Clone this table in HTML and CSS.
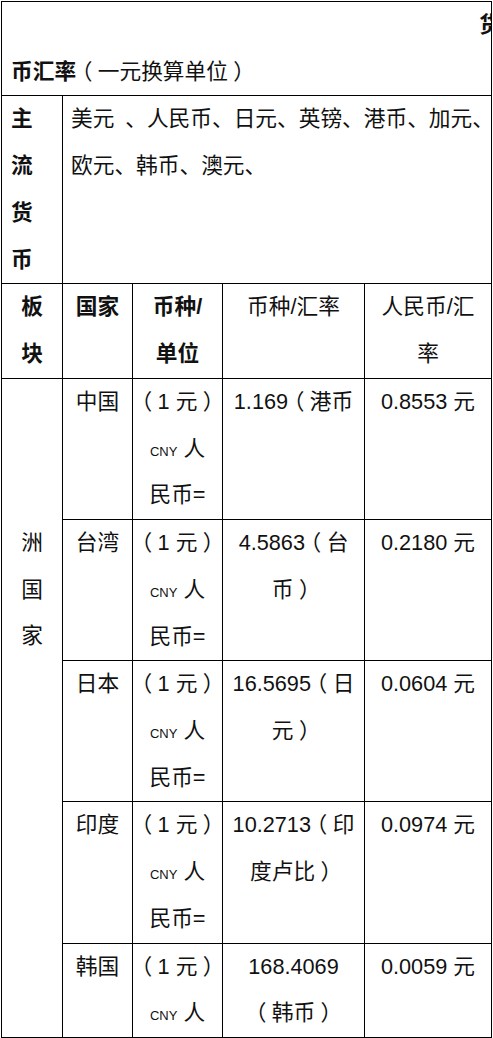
FILE: index.html
```html
<!DOCTYPE html>
<html lang="zh-CN">
<head>
<meta charset="utf-8">
<title>货币汇率</title>
<link rel="stylesheet" href="styles.css">
</head>
<body>
<table class="rates">
  <colgroup>
    <col class="c-block">
    <col class="c-country">
    <col class="c-unit">
    <col class="c-rate">
    <col class="c-rmb">
  </colgroup>
  <tr>
    <td colspan="5" class="title">
      <div class="title-top"><b class="cut">货</b></div>
      <div class="title-main"><b>币汇率</b><span class="lp">（</span>一元换算单位<span class="rp">）</span></div>
    </td>
  </tr>
  <tr>
    <td class="label">主<br>流<br>货<br>币</td>
    <td colspan="4" class="list">美元&ensp;、人民币、日元、英镑、港币、加元、<br>欧元、韩币、澳元、</td>
  </tr>
  <tr>
    <td class="strong">板<br>块</td>
    <td class="strong">国家</td>
    <td class="strong">币种/<br>单位</td>
    <td>币种/汇率</td>
    <td>人民币/汇<br>率</td>
  </tr>
  <tr>
    <td rowspan="5" class="region">洲<br>国<br>家</td>
    <td>中国</td>
    <td><span class="lp">（</span>1 元<span class="rp">）</span><br><small>CNY</small> 人<br>民币=</td>
    <td>1.169<span class="lp">（</span>港币</td>
    <td>0.8553 元</td>
  </tr>
  <tr>
    <td>台湾</td>
    <td><span class="lp">（</span>1 元<span class="rp">）</span><br><small>CNY</small> 人<br>民币=</td>
    <td>4.5863<span class="lp">（</span>台<br>币<span class="rp">）</span></td>
    <td>0.2180 元</td>
  </tr>
  <tr>
    <td>日本</td>
    <td><span class="lp">（</span>1 元<span class="rp">）</span><br><small>CNY</small> 人<br>民币=</td>
    <td>16.5695<span class="lp">（</span>日<br>元<span class="rp">）</span></td>
    <td>0.0604 元</td>
  </tr>
  <tr>
    <td>印度</td>
    <td><span class="lp">（</span>1 元<span class="rp">）</span><br><small>CNY</small> 人<br>民币=</td>
    <td>10.2713<span class="lp">（</span>印<br>度卢比<span class="rp">）</span></td>
    <td>0.0974 元</td>
  </tr>
  <tr>
    <td>韩国</td>
    <td><span class="lp">（</span>1 元<span class="rp">）</span><br><small>CNY</small> 人</td>
    <td>168.4069<br><span class="lp">（</span>韩币<span class="rp">）</span></td>
    <td>0.0059 元</td>
  </tr>
</table>
</body>
</html>
```

FILE: styles.css
```css
html, body {
  margin: 0;
  padding: 0;
  background: #fff;
}

body {
  font-family: "Liberation Sans", "Noto Sans CJK SC", sans-serif;
  color: #111;
}

.rates {
  border-collapse: collapse;
  table-layout: fixed;
  width: 491px;
  margin: 1px 0 0 1px;
  font-size: 21.7px;
  line-height: 46.73px;
  white-space: nowrap;
}

.c-block { width: 61px; }
.c-country { width: 70px; }
.c-unit { width: 90px; }
.c-rate { width: 142px; }
.c-rmb { width: 127px; }

.rates td {
  border: 1px solid #000;
  padding: 0 2px;
  vertical-align: top;
  text-align: center;
  font-weight: normal;
  overflow: hidden;
}

.rates b,
.rates .strong {
  font-weight: bold;
}

.rates small {
  font-size: 13px;
  line-height: 0;
}

/* full-width parentheses set centred in their em box, as in the reference:
   half-width alternate glyph plus a quarter em each side */
.lp,
.rp {
  font-feature-settings: "halt" 1;
  padding: 0 0.25em;
}

.rates td.title {
  text-align: left;
  padding: 0 0 0 9px;
}

.title-top {
  text-align: right;
}

.cut {
  margin-right: -10px;
}

.rates td.label {
  text-align: left;
  padding-left: 9px;
  font-weight: bold;
}

.rates td.list {
  text-align: left;
  padding-left: 8px;
  overflow: visible;
}

.rates td.region {
  padding-top: 141.1px;
}
```
